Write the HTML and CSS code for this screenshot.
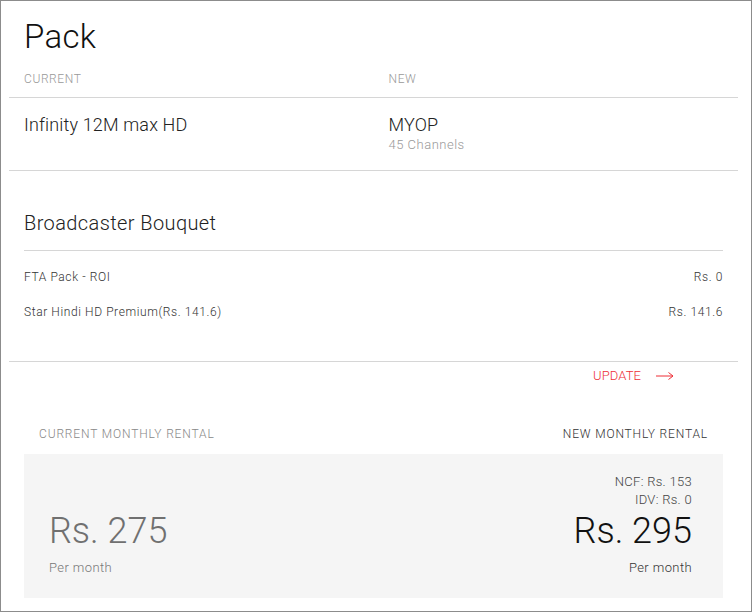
FILE: index.html
```html
<!DOCTYPE html>
<html lang="en">
<head>
<meta charset="utf-8">
<title>Pack</title>
<link rel="stylesheet" href="styles.css">
</head>
<body>
<div class="frame">
  <h1 class="title">Pack</h1>
  <div class="cols head">
    <div class="col"><span class="label">CURRENT</span></div>
    <div class="col"><span class="label">NEW</span></div>
  </div>
  <div class="cols packs">
    <div class="col"><div class="pack-name">Infinity 12M max HD</div></div>
    <div class="col">
      <div class="pack-name">MYOP</div>
      <div class="pack-sub">45 Channels</div>
    </div>
  </div>
  <div class="bouquet">
    <div class="bouquet-inner">
      <h2 class="bouquet-title">Broadcaster Bouquet</h2>
      <ul class="items">
        <li class="item"><span>FTA Pack - ROI</span><span>Rs. 0</span></li>
        <li class="item"><span>Star Hindi HD Premium(Rs. 141.6)</span><span>Rs. 141.6</span></li>
      </ul>
    </div>
  </div>
  <div class="update-row">
    <a class="update" href="#">UPDATE
      <svg class="arrow" width="18" height="10" viewBox="0 0 18 10"><path d="M0 5H17M12.5 1.5L17 5L12.5 8.5" fill="none" stroke="#ee2f37" stroke-width="1"/></svg>
    </a>
  </div>
  <div class="rental">
    <div class="rental-labels">
      <span class="rl-current">CURRENT MONTHLY RENTAL</span>
      <span class="rl-new">NEW MONTHLY RENTAL</span>
    </div>
    <div class="rental-box">
      <div class="price current">
        <div class="amount">Rs. 275</div>
        <div class="per">Per month</div>
      </div>
      <div class="price new">
        <div class="fee">NCF: Rs. 153</div>
        <div class="fee">IDV: Rs. 0</div>
        <div class="amount">Rs. 295</div>
        <div class="per">Per month</div>
      </div>
    </div>
  </div>
</div>
</body>
</html>
```
FILE: styles.css
```css
* { box-sizing: border-box; margin: 0; padding: 0; }
body {
  margin: 0;
  font-family: Roboto, "Liberation Sans", sans-serif;
  font-weight: 300;
  color: #222;
  background: #fff;
}
.frame {
  width: 752px;
  height: 612px;
  border: 1px solid #8c8c8c;
  padding: 0 13px 0 8px;
  overflow: hidden;
}
.title {
  font-size: 33px;
  line-height: 40px;
  font-weight: 300;
  color: #111;
  letter-spacing: 0.3px;
  margin-top: 16px;
  padding-left: 15px;
}
.cols {
  display: grid;
  grid-template-columns: 1fr 1fr;
  border-bottom: 1px solid #d6d6d6;
}
.col { padding-left: 15px; }
.head { padding: 14px 0 10px; }
.label {
  display: block;
  font-size: 12px;
  line-height: 16px;
  color: #999;
  letter-spacing: 0.6px;
}
.packs { padding: 15px 0 17px; min-height: 73px; }
.pack-name { font-size: 18px; line-height: 24px; color: #222; letter-spacing: 0.15px; }
.pack-sub { font-size: 13px; line-height: 16px; color: #999; letter-spacing: 0.5px; }
.bouquet { border-bottom: 1px solid #d6d6d6; padding-bottom: 41px; }
.bouquet-inner { padding: 0 15px; }
.bouquet-title {
  font-size: 20px;
  line-height: 24px;
  font-weight: 300;
  color: #222;
  letter-spacing: 0.4px;
  padding: 40px 0 15px;
  border-bottom: 1px solid #d6d6d6;
}
.items { list-style: none; padding-top: 18px; }
.item {
  display: flex;
  justify-content: space-between;
  font-size: 12px;
  line-height: 16px;
  color: #333;
  font-weight: 300;
  letter-spacing: 0.6px;
}
.item + .item { margin-top: 19px; }
.update-row {
  display: flex;
  justify-content: flex-end;
  padding: 6px 64px 0 0;
}
.update {
  display: flex;
  align-items: center;
  gap: 15px;
  font-size: 13px;
  line-height: 16px;
  color: #ee2f37;
  text-decoration: none;
  letter-spacing: 0.1px;
}
.arrow { display: block; }
.rental { padding: 42px 15px 0; }
.rental-labels {
  display: flex;
  justify-content: space-between;
  padding: 0 15px;
  font-size: 12px;
  line-height: 16px;
  letter-spacing: 0.85px;
  margin-bottom: 12px;
}
.rl-current { color: #888; }
.rl-new { color: #333; }
.rental-box {
  display: flex;
  justify-content: space-between;
  align-items: flex-end;
  background: #f5f5f5;
  height: 144px;
  padding: 0 31px 21px 25px;
}
.price.new { text-align: right; }
.fee { font-size: 13px; line-height: 18px; color: #444; letter-spacing: 0.3px; }
.amount {
  font-size: 36px;
  line-height: 40px;
  font-weight: 300;
  margin-top: 2px;
  margin-bottom: 8px;
}
.current .amount { color: #707070; }
.new .amount { color: #111; }
.per { font-size: 13px; line-height: 18px; letter-spacing: 0.4px; }
.current .per { color: #777; }
.new .per { color: #333; }
```
